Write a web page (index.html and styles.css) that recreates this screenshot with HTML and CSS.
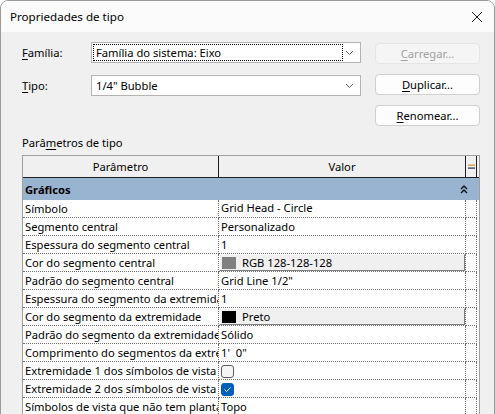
FILE: index.html
```html
<!DOCTYPE html>
<html lang="pt">
<head>
<meta charset="utf-8">
<title>Propriedades de tipo</title>
<link rel="stylesheet" href="styles.css">
</head>
<body>
<div class="window">
  <div class="titlebar">
    <span class="title">Propriedades de tipo</span>
    <svg class="close" width="12" height="12" viewBox="0 0 12 12"><path d="M1 1 L11 11 M11 1 L1 11" stroke="#1a1a1a" stroke-width="1" fill="none"/></svg>
  </div>
  <div class="content">
    <div class="top">
      <div class="fields">
        <div class="field">
          <label class="label"><u>F</u>amília:</label>
          <div class="combo">
            <span class="combo-text focus">Família do sistema: Eixo</span>
            <svg class="chev" width="9" height="6" viewBox="0 0 9 6"><path d="M1 1 L4.5 4.5 L8 1" stroke="#606060" fill="none"/></svg>
          </div>
        </div>
        <div class="field">
          <label class="label"><u>T</u>ipo:</label>
          <div class="combo">
            <span class="combo-text">1/4" Bubble</span>
            <svg class="chev" width="9" height="6" viewBox="0 0 9 6"><path d="M1 1 L4.5 4.5 L8 1" stroke="#606060" fill="none"/></svg>
          </div>
        </div>
      </div>
      <div class="buttons">
        <div class="btn disabled"><u>C</u>arregar...</div>
        <div class="btn"><u>D</u>uplicar...</div>
        <div class="btn"><u>R</u>enomear...</div>
      </div>
    </div>
    <div class="group-label">Parâ<u>m</u>etros de tipo</div>
    <div class="panel">
      <div class="grid">
        <div class="row head">
          <div class="cell">Parâmetro</div>
          <div class="cell">Valor</div>
          <div class="cell eq">
            <svg width="7" height="7" viewBox="0 0 7 7"><rect x="0" y="1.5" width="7" height="1.2" fill="#c8902a"/><rect x="0" y="4.5" width="7" height="1.2" fill="#1e2a44"/></svg>
          </div>
        </div>
        <div class="row group">
          <div class="gcell">Gráficos</div>
          <svg class="collapse" width="8" height="9" viewBox="0 0 8 9"><path d="M1 4 L4 1 L7 4 M1 8 L4 5 L7 8" stroke="#111" stroke-width="1.4" fill="none"/></svg>
        </div>
        <div class="row">
          <div class="cell p">Símbolo</div>
          <div class="cell v"><div class="edit">Grid Head - Circle</div></div>
          <div class="cell e"></div>
        </div>
        <div class="row">
          <div class="cell p">Segmento central</div>
          <div class="cell v">Personalizado</div>
          <div class="cell e"></div>
        </div>
        <div class="row">
          <div class="cell p">Espessura do segmento central</div>
          <div class="cell v">1</div>
          <div class="cell e"></div>
        </div>
        <div class="row">
          <div class="cell p">Cor do segmento central</div>
          <div class="cell v"><div class="colorbtn"><span class="swatch gray"></span>RGB 128-128-128</div></div>
          <div class="cell e"></div>
        </div>
        <div class="row">
          <div class="cell p">Padrão do segmento central</div>
          <div class="cell v">Grid Line 1/2"</div>
          <div class="cell e"></div>
        </div>
        <div class="row">
          <div class="cell p">Espessura do segmento da extremidade</div>
          <div class="cell v">1</div>
          <div class="cell e"></div>
        </div>
        <div class="row">
          <div class="cell p">Cor do segmento da extremidade</div>
          <div class="cell v"><div class="colorbtn"><span class="swatch black"></span>Preto</div></div>
          <div class="cell e"></div>
        </div>
        <div class="row">
          <div class="cell p">Padrão do segmento da extremidade</div>
          <div class="cell v">Sólido</div>
          <div class="cell e"></div>
        </div>
        <div class="row">
          <div class="cell p">Comprimento do segmentos da extremidade</div>
          <div class="cell v">1'&nbsp; 0"</div>
          <div class="cell e"></div>
        </div>
        <div class="row">
          <div class="cell p">Extremidade 1 dos símbolos de vista</div>
          <div class="cell v"><span class="check"></span></div>
          <div class="cell e"></div>
        </div>
        <div class="row">
          <div class="cell p">Extremidade 2 dos símbolos de vista</div>
          <div class="cell v"><span class="check on"><svg width="9" height="7" viewBox="0 0 9 7"><path d="M1.5 3.5 L3.5 5.5 L7.5 1.5" stroke="#fff" stroke-width="1" fill="none"/></svg></span></div>
          <div class="cell e"></div>
        </div>
        <div class="row">
          <div class="cell p">Símbolos de vista que não tem planta</div>
          <div class="cell v">Topo</div>
          <div class="cell e"></div>
        </div>
      </div>
    </div>
  </div>
</div>
</body>
</html>
```

FILE: styles.css
```css
* { box-sizing: border-box; }
html, body { margin: 0; padding: 0; }
body {
  width: 495px;
  height: 414px;
  overflow: hidden;
  font-family: "Noto Sans", "Open Sans", sans-serif;
  font-size: 11.2px;
  color: #000;
  background: #fff;
}
u { text-decoration: underline; text-underline-offset: 2px; }
.window {
  width: 495px;
  height: 420px;
  border: 1px solid #9a9a9a;
  border-radius: 8px 8px 0 0;
  overflow: hidden;
  background: #f0f0f0;
  display: flex;
  flex-direction: column;
}
.titlebar {
  height: 31px;
  flex: none;
  background: #fbfbfb;
  display: flex;
  align-items: center;
  justify-content: space-between;
  padding: 0 10px 0 9px;
}
.title { font-size: 11.6px; color: #000; }
.close { margin-right: 1px; }
.content {
  flex: 1;
  display: flex;
  flex-direction: column;
  padding-left: 21px;
}
.top {
  display: flex;
  padding-top: 10px;
}
.fields {
  width: 339px;
  display: flex;
  flex-direction: column;
  gap: 12px;
}
.field {
  display: flex;
  align-items: center;
  height: 21px;
}
.label { width: 69px; }
.combo {
  width: 270px;
  height: 21px;
  background: #fff;
  border: 1px solid #b4b4b4;
  display: flex;
  align-items: center;
  justify-content: space-between;
  padding: 0 6px 0 1px;
}
.combo-text {
  display: block;
  width: 250px;
  height: 17px;
  line-height: 15px;
  padding-left: 2px;
  border: 1px dotted transparent;
}
.combo-text.focus { border-color: #000; }
.buttons {
  margin-left: 14px;
  width: 105px;
  display: flex;
  flex-direction: column;
  gap: 10px;
  padding-top: 1px;
}
.btn {
  height: 21px;
  border: 1px solid #d0d0d0;
  border-radius: 4px;
  background: #fdfdfd;
  display: flex;
  align-items: center;
  justify-content: center;
}
.btn.disabled {
  background: #f5f5f5;
  border-color: #e5e5e5;
  color: #a0a0a0;
}
.group-label {
  margin-top: 9px;
  height: 20px;
  line-height: 15px;
}
.panel {
  width: 458px;
  flex: 1;
  border: 1px solid #a0a0a0;
  border-bottom: none;
  background: #fff;
}
.grid { width: 456px; }
.row {
  display: grid;
  grid-template-columns: 196px 247px 11px;
  height: 18px;
}
.cell {
  border-right: 1px dotted #707070;
  border-bottom: 1px dotted #707070;
  white-space: nowrap;
  overflow: hidden;
  line-height: 17px;
  padding-left: 2px;
}
.row.head {
  height: 22px;
  background: #f0f0f0;
  border-bottom: 1px solid #1e1e1e;
}
.row.head .cell {
  border-right: 1px solid #1e1e1e;
  border-bottom: none;
  text-align: center;
  line-height: 21px;
  padding-left: 0;
}
.row.head .cell.eq {
  display: flex;
  align-items: center;
  justify-content: center;
}
.row.group {
  height: 22px;
  background: #99b4d1;
  display: flex;
  align-items: center;
  justify-content: space-between;
  padding: 0 11px 0 2px;
}
.gcell { font-weight: bold; }
.cell.v { padding-left: 2px; position: relative; }
.edit {
  position: absolute;
  left: -1px; top: -1px;
  width: 248px;
  height: 19px;
  border: 1px solid #000;
  padding-left: 2px;
  line-height: 16px;
  background: #fff;
}
.colorbtn {
  position: absolute;
  left: 0; top: 0;
  width: 246px;
  height: 17px;
  background: #f0f0f0;
  border-top: 1px solid #fff;
  border-left: 1px solid #fff;
  border-right: 1px solid #808080;
  border-bottom: 1px solid #808080;
  display: flex;
  align-items: center;
  padding-left: 2px;
  gap: 6px;
}
.swatch { width: 14px; height: 12px; display: inline-block; }
.swatch.gray { background: #808080; }
.swatch.black { background: #000; }
.check {
  display: inline-flex;
  align-items: center;
  justify-content: center;
  width: 13px;
  height: 13px;
  border: 1px solid #5f5f5f;
  border-radius: 3px;
  background: #f5f5f5;
  vertical-align: middle;
  margin-top: -2px;
}
.check.on {
  background: #005fb8;
  border-color: #005fb8;
}
```
